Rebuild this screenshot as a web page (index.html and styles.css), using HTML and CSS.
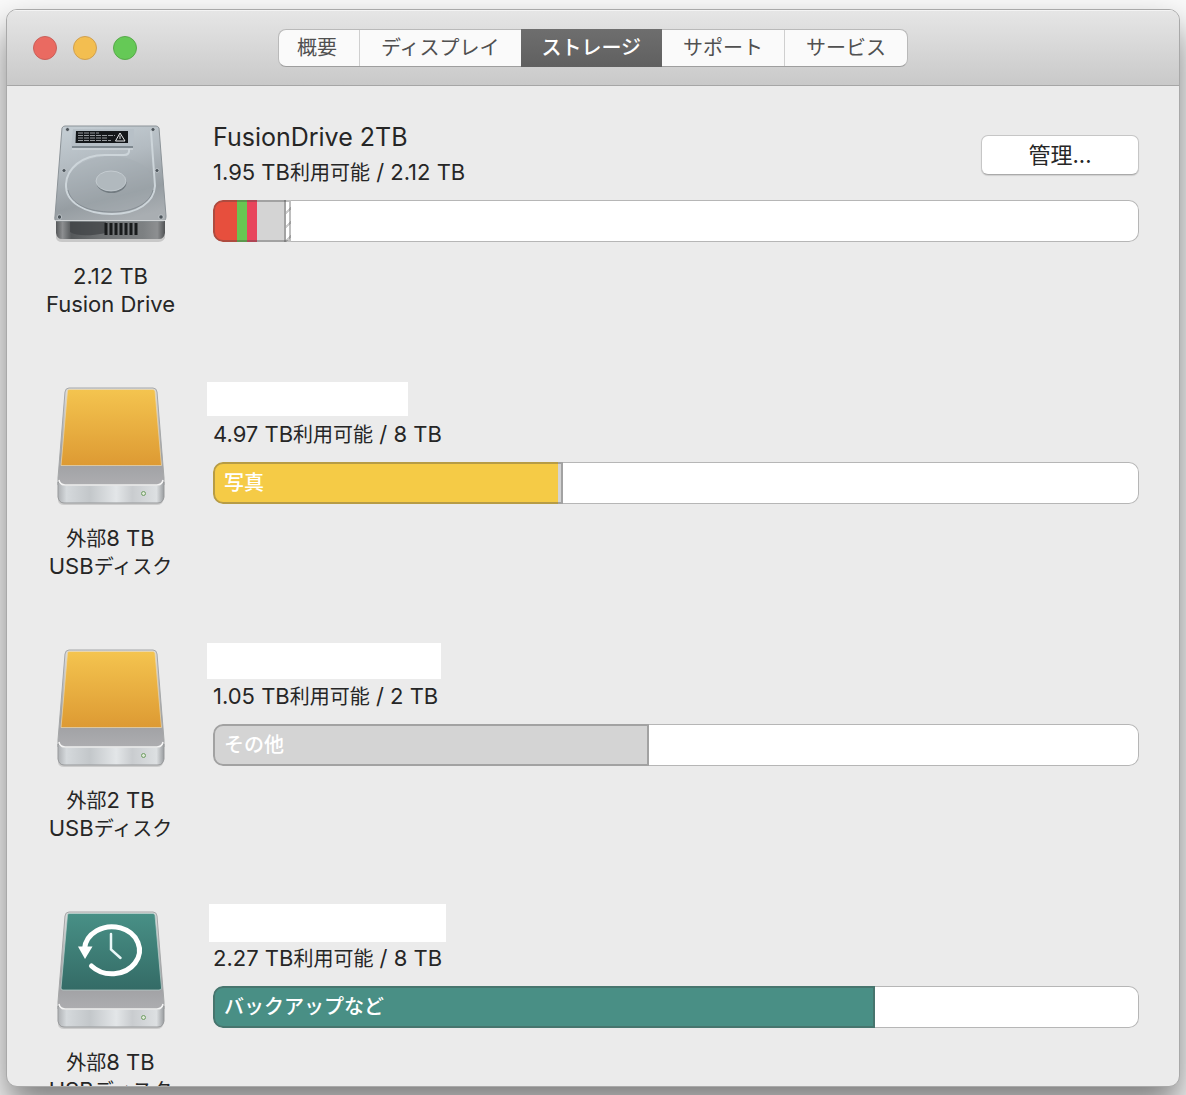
FILE: index.html
```html
<!DOCTYPE html>
<html lang="ja">
<head>
<meta charset="utf-8">
<meta name="viewport" content="width=device-width, initial-scale=1">
<title>ストレージ</title>
<link rel="stylesheet" href="styles.css">
</head>
<body>
<svg class="defs" aria-hidden="true">
  <defs>
    <linearGradient id="amber" x1="0" y1="0" x2="0" y2="1"><stop offset="0" stop-color="#f4c44f"/><stop offset="1" stop-color="#dd9a33"/></linearGradient>
    <linearGradient id="teal" x1="0" y1="0" x2="0" y2="1"><stop offset="0" stop-color="#489086"/><stop offset="1" stop-color="#346b66"/></linearGradient>
    <linearGradient id="shelf" x1="0" y1="0" x2="0" y2="1"><stop offset="0" stop-color="#dedede"/><stop offset=".7" stop-color="#9c9da0"/><stop offset="1" stop-color="#adadb0"/></linearGradient>
    <linearGradient id="front" x1="0" y1="0" x2="1" y2="0"><stop offset="0" stop-color="#aeb1b4"/><stop offset=".08" stop-color="#d5d9dc"/><stop offset=".3" stop-color="#c3c7ca"/><stop offset=".55" stop-color="#e3e6e8"/><stop offset=".7" stop-color="#c9cccf"/><stop offset=".93" stop-color="#dde0e2"/><stop offset="1" stop-color="#999c9f"/></linearGradient>
    <linearGradient id="metal" x1=".3" y1="0" x2=".6" y2="1"><stop offset="0" stop-color="#c3ccd2"/><stop offset=".35" stop-color="#b3bbc1"/><stop offset=".75" stop-color="#969da2"/><stop offset="1" stop-color="#a9aeb2"/></linearGradient>
    <linearGradient id="base" x1="0" y1="0" x2="1" y2="0"><stop offset="0" stop-color="#56585a"/><stop offset=".06" stop-color="#8d8f91"/><stop offset=".14" stop-color="#55585a"/><stop offset=".4" stop-color="#6e7173"/><stop offset=".8" stop-color="#7d8082"/><stop offset=".93" stop-color="#8d8f91"/><stop offset="1" stop-color="#505254"/></linearGradient>
    <g id="case">
      <path d="M9 108H113V115Q112 119 107 119H14Q9 119 8 115Z" fill="#000" opacity=".13"/>
      <path d="M15 6Q15.500 2 19 2H103Q106.500 2 107 6L114 92V99H8V92Z" fill="url(#shelf)" stroke="#a5a7a8"/>
      <path d="M8 96Q10 99 14 99H108Q112 99 114 96V111Q113 117 108 117H14Q9 117 8 111Z" fill="url(#front)" stroke="#97999b"/>
      <path d="M9 94Q10 99 15 99H107Q112 99 113 94" fill="none" stroke="#f4f4f4" stroke-width="1.500"/>
      <circle cx="93.500" cy="107.500" r="2" fill="#dfe9d8" stroke="#6f9c65"/>
    </g>
    <symbol id="usb" viewBox="1 0 120 120">
      <use href="#case"/>
      <path d="M17.500 5Q17.500 3.500 19 3.500H103Q104.500 3.500 105 5L111.500 79.500H11Z" fill="url(#amber)" stroke="#e9d9b4" stroke-opacity=".7"/>
    </symbol>
    <symbol id="backup" viewBox="1 0 120 120">
      <use href="#case"/>
      <path d="M17.500 5Q17.500 3.500 19 3.500H103Q104.500 3.500 105 5L111.500 78Q111.500 80 109 80H13Q11 80 11 78Z" fill="url(#teal)" stroke="#bcd3cf" stroke-opacity=".7"/>
      <path d="M34.500 39A27.500 23.500 0 1 1 41.500 56" fill="none" stroke="#fff" stroke-width="5" stroke-linecap="round"/>
      <path d="M28 36.500H42.500L35 49Z" fill="#fff"/>
      <path d="M61 24V39.500L70.500 48" fill="none" stroke="#eaf8f8" stroke-width="2.500" stroke-linecap="round"/>
    </symbol>
    <symbol id="hdd" viewBox="1 2 120 120">
      <path d="M6 108H115V116Q113 120 108 120H12Q7 120 6 116Z" fill="#000" opacity=".15"/>
      <path d="M6 96H115V111Q114 117 109 117H12Q7 117 6 111Z" fill="url(#base)"/>
      <path d="M20 100H56V111Q30 116 20 110Z" fill="#3f4244" opacity=".7"/>
      <path d="M56 101V113M61 101V113M66 101V113M71 101V113M76 101V113M81 101V113M86 101V113" stroke="#191b1c" stroke-width="3"/>
      <path d="M12 6Q13 4 15 4H106Q108 4 109 6L116 94Q116 99 113 99H7Q4 99 5 94Z" fill="url(#metal)" stroke="#8c9398"/>
      <path d="M5 98.500H115" stroke="#d1d4d6"/>
      <ellipse cx="60.500" cy="63" rx="44" ry="29" fill="#a3acb2" opacity=".35"/>
      <path d="M79 27Q80 33 74 33H55C31 33 17 47 16 62C15 80 35 92 62 92C88 92 104 80 105 64L101 9" fill="none" stroke="#cdd5da" stroke-width="2"/>
      <path d="M18 68C21 82 38 90 62 90C84 90 100 81 103 68" fill="none" stroke="#747d83" opacity=".6"/>
      <path d="M23 7H84L83 26H21Z" fill="#b7c0c7"/>
      <path d="M22 25H83" stroke="#7f8990" stroke-width="2"/>
      <path d="M22 27H83" stroke="#d7dde1"/>
      <path d="M26 9H78V21H25.500Z" fill="#14171a"/>
      <path d="M28 11H49M28 13.500H65M28 16H58M28 18.500H61" stroke="#b7bcc0" stroke-width=".800" stroke-dasharray="5 1"/>
      <path d="M70 11L75 19H65.500ZM70 13.500V17" fill="none" stroke="#e8eaeb"/>
      <ellipse cx="61.500" cy="60.500" rx="15" ry="10.500" fill="#727b81"/>
      <ellipse cx="61" cy="59" rx="15" ry="10" fill="#b1b9be" stroke="#cfd6da" stroke-width=".700"/>
      <g fill="#4d555b" stroke="#d2d8dc" stroke-width=".700"><circle cx="17.500" cy="7.500" r="2"/><circle cx="103" cy="7.500" r="2"/><circle cx="14" cy="48.500" r="2"/><circle cx="107" cy="48.500" r="2"/><circle cx="9.500" cy="95" r="2.200"/><circle cx="111" cy="95" r="2.200"/></g>
    </symbol>
  </defs>
</svg>
<div class="window">
  <header class="titlebar">
    <div class="lights">
      <button class="light close" aria-label="閉じる"></button>
      <button class="light minimize" aria-label="しまう"></button>
      <button class="light zoom" aria-label="拡大"></button>
    </div>
    <nav class="tabs">
      <button class="tab">概要</button>
      <button class="tab">ディスプレイ</button>
      <button class="tab selected" aria-current="page">ストレージ</button>
      <button class="tab">サポート</button>
      <button class="tab">サービス</button>
    </nav>
  </header>
  <main class="drives">
    <section class="drive">
      <div class="device">
        <svg class="icon" aria-hidden="true"><use href="#hdd"/></svg>
        <p class="label">2.12 TB<br>Fusion Drive</p>
      </div>
      <div class="details">
        <div class="heading">
          <div class="names">
            <h2 class="name">FusionDrive 2TB</h2>
            <p class="free">1.95 TB<span class="ja">利用可能</span> / 2.12 TB</p>
          </div>
          <button class="manage">管理...</button>
        </div>
        <div class="bar">
          <div class="used" style="width: 8.4%">
            <span class="part red" style="width: 31%"></span>
            <span class="part green" style="width: 13%"></span>
            <span class="part pink" style="width: 13%"></span>
            <span class="part gray" style="width: 34%"></span>
            <span class="part purgeable"></span>
          </div>
        </div>
      </div>
    </section>
    <section class="drive">
      <div class="device">
        <svg class="icon" aria-hidden="true"><use href="#usb"/></svg>
        <p class="label"><span class="ja">外部</span>8 TB<br>USB<span class="ja">ディスク</span></p>
      </div>
      <div class="details">
        <div class="heading">
          <div class="names">
            <div class="name"><span class="blank short"></span></div>
            <p class="free">4.97 TB<span class="ja">利用可能</span> / 8 TB</p>
          </div>
        </div>
        <div class="bar">
          <div class="used" style="width: 37.8%">
            <span class="part yellow" style="width: 98.6%">写真</span>
            <span class="part gray rest"></span>
          </div>
        </div>
      </div>
    </section>
    <section class="drive">
      <div class="device">
        <svg class="icon" aria-hidden="true"><use href="#usb"/></svg>
        <p class="label"><span class="ja">外部</span>2 TB<br>USB<span class="ja">ディスク</span></p>
      </div>
      <div class="details">
        <div class="heading">
          <div class="names">
            <div class="name"><span class="blank medium"></span></div>
            <p class="free">1.05 TB<span class="ja">利用可能</span> / 2 TB</p>
          </div>
        </div>
        <div class="bar">
          <div class="used" style="width: 47.1%">
            <span class="part gray rest">その他</span>
          </div>
        </div>
      </div>
    </section>
    <section class="drive">
      <div class="device">
        <svg class="icon" aria-hidden="true"><use href="#backup"/></svg>
        <p class="label"><span class="ja">外部</span>8 TB<br>USB<span class="ja">ディスク</span></p>
      </div>
      <div class="details">
        <div class="heading">
          <div class="names">
            <div class="name"><span class="blank long"></span></div>
            <p class="free">2.27 TB<span class="ja">利用可能</span> / 8 TB</p>
          </div>
        </div>
        <div class="bar">
          <div class="used" style="width: 71.5%">
            <span class="part teal rest">バックアップなど</span>
          </div>
        </div>
      </div>
    </section>
  </main>
</div>
</body>
</html>
```
FILE: styles.css
```css
* {
  box-sizing: border-box;
}

body {
  margin: 0;
  height: 100vh;
  padding: 9px 6px 8px;
  overflow: hidden;
  background: #fafafa;
  color: #262626;
  font: 22px/28px Inter, "Noto Sans CJK JP", sans-serif;
}

h2,
p {
  margin: 0;
  font-weight: 400;
}

button {
  margin: 0;
  padding: 0;
  border: 0;
  color: inherit;
  font: 20px/28px Inter, "Noto Sans CJK JP", sans-serif;
}

.defs {
  position: absolute;
  width: 0;
  height: 0;
}

.window {
  display: flex;
  flex-direction: column;
  height: 100%;
  overflow: hidden;
  border: 1px solid #a9a9a9;
  border-radius: 11px;
  background: #ebebeb;
  box-shadow: 0 20px 36px rgba(0, 0, 0, 0.5);
}

.titlebar {
  display: grid;
  grid-template-columns: 1fr auto 1fr;
  align-items: center;
  flex: none;
  height: 76px;
  padding: 0 26px;
  border-bottom: 1px solid #a6a6a6;
  background: linear-gradient(#e6e6e6, #c9c9c9);
  box-shadow: inset 0 1px #f4f4f4;
}

.lights {
  display: flex;
  gap: 16px;
}

.light {
  width: 24px;
  height: 24px;
  border: 1px solid;
  border-radius: 50%;
}

.close {
  border-color: #c9605a;
  background: #ea6a61;
}

.minimize {
  border-color: #d0a050;
  background: #f3be50;
}

.zoom {
  border-color: #58a94b;
  background: #65c956;
}

.tabs {
  display: flex;
  height: 38px;
  border: 1px solid #b9b9b9;
  border-bottom-color: #9e9e9e;
  border-radius: 8px;
  background: #fafafa;
}

.tab {
  padding: 0 21px;
  background: none;
  color: #505050;
}

.tab:first-child {
  padding: 0 22px 0 18px;
}

.tab + .tab {
  border-left: 1px solid #cfcfcf;
}

.tab.selected {
  margin: -1px 0;
  border: 0;
  background: linear-gradient(#6e6e6e, #606060);
  color: #fff;
  font-weight: 500;
}

.tab.selected + .tab {
  border-left: 0;
}

.drives {
  flex: 1;
  min-height: 0;
  overflow: hidden;
  padding: 34px 40px 0 33px;
}

.drive {
  display: grid;
  grid-template-columns: 141px 1fr;
  column-gap: 32px;
  height: 262px;
}

.device {
  display: flex;
  flex-direction: column;
  align-items: center;
  gap: 18px;
  padding-top: 4px;
}

.icon {
  width: 120px;
  height: 120px;
}

.label {
  text-align: center;
  white-space: nowrap;
}

.ja {
  font-size: 20px;
  line-height: 20px;
}

.heading {
  display: flex;
  justify-content: space-between;
  align-items: center;
  height: 80px;
}

.names {
  height: 80px;
}

.name {
  display: flex;
  align-items: center;
  height: 34px;
  margin-bottom: 4px;
  font-size: 25px;
}

.blank {
  margin-left: -6px;
  flex: none;
  background: #fff;
}

.short {
  width: 201px;
  height: 34px;
}

.medium {
  width: 234px;
  height: 36px;
}

.long {
  width: 237px;
  height: 38px;
  margin-left: -4px;
}

.manage {
  width: 158px;
  height: 40px;
  margin-bottom: 10px;
  border: 1px solid #c6c6c6;
  border-bottom-color: #aaa;
  border-radius: 7px;
  background: #fff;
  box-shadow: 0 1px 1px rgba(0, 0, 0, 0.12);
  font-size: 22px;
}

.bar {
  height: 42px;
  overflow: hidden;
  border-radius: 10px;
  background: #fff;
  box-shadow: inset 0 0 0 1px #b6b6b6;
}

.used {
  position: relative;
  display: flex;
  height: 100%;
  overflow: hidden;
  border-radius: 10px 0 0 10px;
}

.used::after {
  position: absolute;
  inset: 0;
  border: 2px solid rgba(70, 70, 70, 0.35);
  border-radius: inherit;
  content: "";
}

.part {
  flex: none;
  color: #fff;
  font-size: 20px;
  font-weight: 500;
  line-height: 42px;
  text-indent: 11px;
}

.rest {
  flex: 1;
}

.red {
  background: #e74f3d;
}

.green {
  background: #68c652;
}

.pink {
  background: #e8455c;
}

.gray {
  background: #d4d4d4;
}

.yellow {
  background: #f5cb46;
}

.teal {
  background: #498f85;
}

.purgeable {
  flex: 1;
  border-left: 2px solid #a2a2a2;
  background: repeating-linear-gradient(135deg, #fff 0 8px, #ccc 8px 10px);
}
```
